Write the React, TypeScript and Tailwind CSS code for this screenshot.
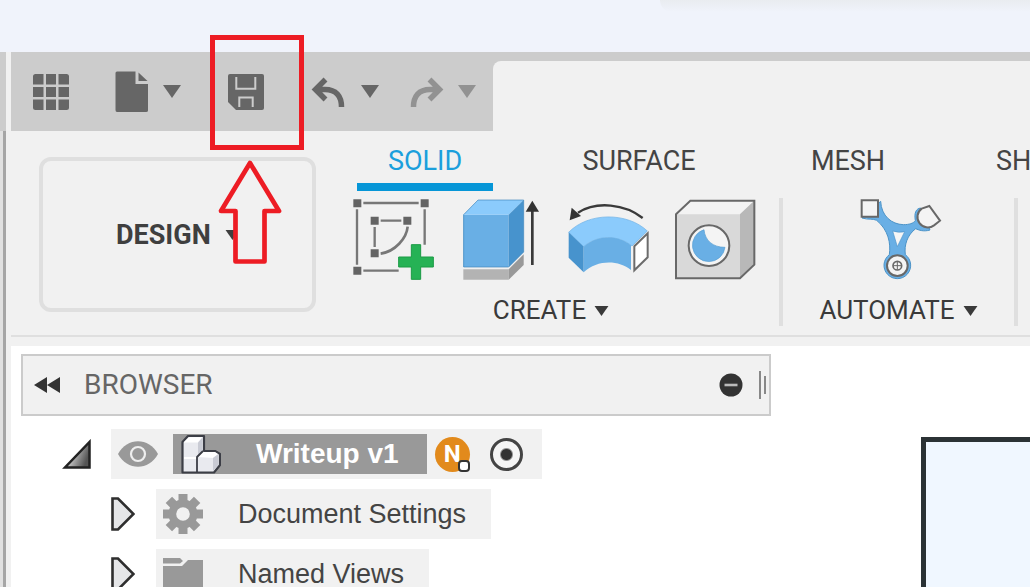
import type { ReactNode } from "react";

function Caret({ className }: { className: string }) {
  return (
    <svg viewBox="0 0 18 13" className={className} fill="currentColor" aria-hidden="true">
      <path d="M0 0h18L9 13z" />
    </svg>
  );
}

function GridIcon() {
  return (
    <svg viewBox="0 0 36 36" className="size-9" fill="#666" aria-hidden="true">
      <path d="M2.500 0H10.500V10.500H0V2.500Q0 0 2.500 0zM13 0h10v10.500H13zM25.500 0h8Q36 0 36 2.500v8H25.500zM0 13h10.500v10H0zM13 13h10v10H13zM25.500 13H36v10H25.500zM0 25.500h10.500V36h-8Q0 36 0 33.500zM13 25.500h10V36H13zM25.500 25.500H36v8q0 2.500-2.500 2.500h-8z" />
    </svg>
  );
}

function FileIcon() {
  return (
    <svg viewBox="0 0 34 42" className="h-[42px] w-[34px]" fill="#666" aria-hidden="true">
      <path d="M2 0.500H20.500V13H33V39.500Q33 41 31 41H2Q0.500 41 0.500 39V2Q0.500 0.500 2 0.500z" />
      <path d="M23.500 1.500L32.500 10H23.500z" />
    </svg>
  );
}

function SaveIcon() {
  return (
    <svg viewBox="0 0 36 36" className="size-9" aria-hidden="true">
      <path d="M2 0H34Q36 0 36 2V34Q36 36 34 36H8L0 28V2Q0 0 2 0z" fill="#666" />
      <path d="M8.300 3V14.700H27.300V3M11.300 33V23.500H24.700V33" fill="none" stroke="#ccc" strokeWidth="2" />
    </svg>
  );
}

function UndoIcon({ flipped = false }: { flipped?: boolean }) {
  return (
    <svg viewBox="0 0 34 32" className="h-8 w-[34px]" fill="none" stroke={flipped ? "#929292" : "#666"} strokeWidth="5.500" aria-hidden="true">
      <g transform={flipped ? "translate(34 0) scale(-1 1)" : undefined}>
        <path d="M14.500 3.500L4.500 13.500L14.500 23.500M4.500 13.500H14C25 13.500 30.500 20 30.500 31" />
      </g>
    </svg>
  );
}

function SketchIcon() {
  return (
    <svg viewBox="39 204 246 246" className="size-[82px]" aria-hidden="true">
      <path d="M70 219H236M51 238V404M254 238V344M70 422H176M122 272H184M104 291V351" stroke="#777" strokeWidth="7" />
      <path d="M203 290C200 325 165 365 122 371" fill="none" stroke="#777" strokeWidth="8" />
      <path d="M40 208h24v24H40zM242 208h24v24h-24zM40 410h24v24H40zM92 260h24v24H92zM190 260h24v24h-24zM92 358h24v24H92z" fill="#646464" />
      <path d="M214 344h28v37h38v30h-38v37h-28v-37h-38v-30h38z" fill="#26b255" stroke="#1b9b45" strokeWidth="3" />
    </svg>
  );
}

function ExtrudeIcon() {
  return (
    <svg viewBox="360 204 246 246" className="size-[82px]" aria-hidden="true">
      <path d="M370 418H506V449H370z" fill="#b3b3b3" />
      <path d="M506 418L551 373V405L506 449z" fill="#999" />
      <path d="M370 254H506V411H370z" fill="#69afe5" />
      <path d="M370 254L414 210H551L506 254z" fill="#8bcbfc" />
      <path d="M506 254L551 210V366L506 411z" fill="#4793cd" />
      <path d="M371 254L414 210H551V366L506 411H371z" fill="none" stroke="#3f86bd" strokeWidth="2" />
      <path d="M577 235V405" stroke="#3a3a3a" strokeWidth="8" />
      <path d="M577 212L597 245H557z" fill="#333" />
    </svg>
  );
}

function RevolveIcon() {
  return (
    <svg viewBox="51 204 246 246" className="size-[82px]" aria-hidden="true">
      <path d="M278 264C225 222 140 212 84 248" fill="none" stroke="#3a3a3a" strokeWidth="7" />
      <path d="M59 271L65 233L93 258z" fill="#333" />
      <path d="M56 307C115 246 232 246 292 303L246 348C205 314 141 314 101 350z" fill="#8bcbfc" stroke="#69afe5" strokeWidth="2" />
      <path d="M56 307L101 350V427L56 383z" fill="#4793cd" />
      <path d="M101 350C141 314 205 314 243 346V420C205 389 141 389 101 427z" fill="#69afe5" />
      <path d="M253 349L293 310V382L253 421z" fill="#fff" stroke="#6c6c6c" strokeWidth="6" />
    </svg>
  );
}

function HoleIcon() {
  return (
    <svg viewBox="375 204 246 246" className="size-[82px]" aria-hidden="true">
      <path d="M381 253L424 212H616V404L573 445H381z" fill="#d9d9d9" />
      <path d="M381 253L424 212H616L573 253z" fill="#f3f3f3" />
      <path d="M573 253L616 212V404L573 445z" fill="#b8b8b8" />
      <path d="M381 253L424 212H616V404L573 445H381z" fill="none" stroke="#686868" strokeWidth="6" />
      <circle cx="480" cy="347" r="61" fill="#f4f4f4" stroke="#686868" strokeWidth="6" />
      <path d="M465 299C468 332 492 352 528 352A49 49 0 1 1 465 299z" fill="#69afe5" stroke="#559dd2" strokeWidth="2" />
    </svg>
  );
}

function AutomateIcon() {
  return (
    <svg viewBox="294 204 246 246" className="size-[82px] overflow-visible" aria-hidden="true">
      <path
        d="M306 264L362 214C364 258 395 283 430 284C448 284 460 280 466 272C462 248 468 236 482 234L510 300C490 306 476 300 467 296C442 315 432 345 436 374A40 40 0 1 1 388 374C393 340 385 300 350 271C338 265 325 270 306 264z"
        fill="#69afe5"
        stroke="#4b93c8"
        strokeWidth="3"
      />
      <path d="M398 303Q415 309 434 305L412 350z" fill="#f6f6f6" stroke="#4b93c8" strokeWidth="2" />
      <path d="M305 211h49v49h-49z" fill="#f4f4f4" stroke="#686868" strokeWidth="6" />
      <path d="M485 236L508 228L540 272L522 286A31 31 0 1 1 485 236z" fill="#f4f4f4" stroke="#686868" strokeWidth="6" />
      <circle cx="412" cy="407" r="31" fill="#f4f4f4" stroke="#686868" strokeWidth="6" />
      <circle cx="412" cy="407" r="13" fill="none" stroke="#686868" strokeWidth="5" />
      <path d="M412 395v24M400 407h24" stroke="#686868" strokeWidth="3" />
    </svg>
  );
}

function EyeIcon() {
  return (
    <svg viewBox="0 0 40 26" className="h-[26px] w-10" aria-hidden="true">
      <path d="M0 13C9-4 31-4 40 13C31 30 9 30 0 13z" fill="#999" />
      <circle cx="20" cy="13" r="7" fill="none" stroke="#eee" strokeWidth="2.200" />
    </svg>
  );
}

function ComponentIcon() {
  return (
    <svg viewBox="0 0 40 40" className="size-10" strokeLinejoin="round" aria-hidden="true">
      <path d="M1.500 8L7 2H23V17H34L39 20V31L33 38.500H1.500z" fill="#e9eaef" stroke="#3c3e46" strokeWidth="2.200" />
      <path d="M3 8L8 3.200H21.500L17 8.500H3z" fill="#fff" />
      <path d="M17 8.500L21.500 3.500V17L17 22z" fill="#c9cbd4" />
      <path d="M17 23L22 18H34L37 20L32 24z" fill="#fff" />
      <path d="M32 24L37.500 20V31L32 37z" fill="#c9cbd4" />
      <path d="M3 24H16" stroke="#fff" strokeWidth="2" />
      <path d="M16 38V23L22 17" fill="none" stroke="#3c3e46" strokeWidth="1.800" />
    </svg>
  );
}

function GearIcon() {
  return (
    <svg viewBox="-20 -20 40 40" className="size-10" aria-hidden="true">
      <g fill="#999">
        {[0, 45, 90, 135].map((angle) => (
          <rect key={angle} x="-4.500" y="-20" width="9" height="40" transform={`rotate(${angle})`} />
        ))}
        <circle r="14.500" />
      </g>
      <circle r="6.800" fill="#f1f1f1" />
    </svg>
  );
}

function FolderIcon() {
  return (
    <svg viewBox="0 0 40 34" className="h-[34px] w-10" fill="#999" aria-hidden="true">
      <path d="M0 1h17l3 3-3 2.500H0zM0 9h19l6-6h15v31H0z" />
    </svg>
  );
}

function Expander({ label }: { label: string }) {
  return (
    <button type="button" aria-label={label} className="mr-[21px] ml-[90px]">
      <svg viewBox="0 0 24 34" className="h-[34px] w-6" aria-hidden="true">
        <path d="M1.500 1.500H7L22.500 17L7 32.500H1.500z" fill="#e5e6e8" stroke="#2e2e2e" strokeWidth="2.600" />
      </svg>
    </button>
  );
}

function TreeItem({ label, icon }: { label: string; icon: ReactNode }) {
  return (
    <li className="flex h-[50px] shrink-0 items-center">
      <Expander label={`Expand ${label}`} />
      <div className="flex h-full items-center gap-[35px] bg-[#f1f1f1] pr-[25px] pl-[7px]">
        {icon}
        <span className="font-['Liberation_Sans',sans-serif] text-[27px] leading-6 whitespace-nowrap text-[#444]">{label}</span>
      </div>
    </li>
  );
}

function PanelMenu({ label }: { label: string }) {
  return (
    <button type="button" className="flex h-[31px] items-center gap-2 text-[26px] leading-[31px] text-[#3a3a3a]">
      {label}
      <Caret className="h-[10px] w-[15px]" />
    </button>
  );
}

const tabs = [
  { name: "SOLID", box: "w-[136px] justify-center border-[#0696d7] text-[#1b9fdc]" },
  { name: "SURFACE", box: "w-[178px] justify-center border-transparent text-[#444]" },
  { name: "MESH", box: "w-[126px] justify-center border-transparent text-[#444]" },
  { name: "SH", box: "pl-7 border-transparent text-[#444]" },
];

const createTools = [
  { name: "Create sketch", icon: <SketchIcon /> },
  { name: "Extrude", icon: <ExtrudeIcon /> },
  { name: "Revolve", icon: <RevolveIcon /> },
  { name: "Hole", icon: <HoleIcon /> },
];

export default function App() {
  return (
    <div className="relative flex h-screen flex-col overflow-hidden bg-white font-[Roboto,sans-serif]">
      <div className="flex h-[52px] shrink-0 bg-[#f0f3fb]">
        <div className="ml-[660px] h-3 flex-1 rounded-bl-xl bg-linear-to-b from-[#e9ecf0] to-[#f0f3fb]" />
      </div>

      <div className="flex min-h-0 flex-1">
        <div className="flex w-[11px] shrink-0 flex-col bg-[#f1f1f1]">
          <div className="h-[79px] w-[6px] shrink-0 bg-[#ccc]" />
          <div className="w-[6px] flex-1 border-r-[3px] border-[#a6a6a6] bg-[#e1e1e1]" />
        </div>

        <div className="flex min-w-0 flex-1 flex-col">
          <header className="flex h-[79px] shrink-0 items-center bg-[#ccc] text-[#666]">
            <button type="button" aria-label="Data panel" className="ml-[22px]"><GridIcon /></button>
            <button type="button" aria-label="File" className="ml-[46px] flex items-center gap-[14px]">
              <FileIcon />
              <Caret className="h-[13px] w-[18px]" />
            </button>
            <button type="button" aria-label="Save" className="ml-[47px]"><SaveIcon /></button>
            <button type="button" aria-label="Undo" className="ml-[47px] flex items-center gap-4">
              <UndoIcon />
              <Caret className="h-[13px] w-[18px]" />
            </button>
            <button type="button" aria-label="Redo" className="ml-[31px] flex items-center gap-[14px] text-[#929292]">
              <UndoIcon flipped />
              <Caret className="h-[13px] w-[18px]" />
            </button>
            <div className="ml-[17px] h-[70px] flex-1 self-end rounded-tl-lg bg-[#f1f1f1]" />
          </header>

          <div className="flex shrink-0 bg-[#f1f1f1]">
            <button
              type="button"
              className="mt-[26px] ml-7 flex h-[155px] w-[277px] shrink-0 items-center gap-[14px] rounded-xl border-4 border-[#dfdfdf] pl-[73px] text-[27px] leading-8 font-bold text-[#3f3f3f]"
            >
              DESIGN
              <Caret className="h-[10px] w-[15px]" />
            </button>

            <div className="ml-[37px] flex min-w-0 flex-1 flex-col">
              <div role="tablist" className="flex gap-[57px] overflow-hidden pl-1">
                {tabs.map((tab, i) => (
                  <button
                    key={tab.name}
                    type="button"
                    role="tab"
                    aria-selected={i === 0}
                    className={`flex h-[60px] shrink-0 items-center border-b-8 pt-2 text-[27px] leading-8 whitespace-nowrap ${tab.box}`}
                  >
                    {tab.name}
                  </button>
                ))}
              </div>
              <div className="mt-[7px] flex">
                <section className="flex w-[430px] shrink-0 flex-col items-start gap-[15px] border-r-4 border-[#dfdfdf]">
                  <div className="flex gap-[25px]">
                    {createTools.map((tool) => (
                      <button key={tool.name} type="button" aria-label={tool.name}>{tool.icon}</button>
                    ))}
                  </div>
                  <div className="flex w-[396px] justify-center">
                    <PanelMenu label="CREATE" />
                  </div>
                </section>
                <section className="flex w-[235px] shrink-0 flex-col items-center gap-[15px] border-r-4 border-[#dfdfdf]">
                  <button type="button" aria-label="Automated modeling"><AutomateIcon /></button>
                  <PanelMenu label="AUTOMATE" />
                </section>
              </div>
            </div>
          </div>
          <div className="h-[9px] shrink-0 bg-[#f1f1f1]" />
          <div className="h-[11px] shrink-0 border-t-2 border-[#dfdfdf] bg-[#f1f1f1]" />

          <main className="flex min-h-0 flex-1 overflow-hidden bg-white pl-[10px]">
            <aside className="flex w-[750px] shrink-0 flex-col pt-2">
              <div className="flex h-[62px] shrink-0 items-center border-2 border-[#cbcbcb] bg-[#f1f1f1]">
                <button type="button" aria-label="Collapse browser" className="ml-[11px]">
                  <svg viewBox="0 0 26 16" className="h-4 w-[26px]" fill="#333" aria-hidden="true">
                    <path d="M13 0V16L0 8zM26 0V16L13 8z" />
                  </svg>
                </button>
                <h2 className="ml-6 text-[28px] leading-8 text-[#666]">BROWSER</h2>
                <button type="button" aria-label="Minimize" className="ml-auto">
                  <svg viewBox="0 0 24 24" className="size-6" aria-hidden="true">
                    <circle cx="12" cy="12" r="11.500" fill="#333" />
                    <path d="M5.500 12h13" stroke="#bbb" strokeWidth="2.600" />
                  </svg>
                </button>
                <div className="mr-[3px] ml-4 flex items-center gap-[3px]">
                  <div className="h-7 w-[2px] bg-[#888]" />
                  <div className="h-[18px] w-[2px] bg-[#888]" />
                </div>
              </div>

              <ul className="mt-[13px] flex flex-col gap-[10px]">
                <li className="flex h-[50px] shrink-0 items-center">
                  <button type="button" aria-label="Collapse Writeup v1" className="mr-5 ml-[41px]">
                    <svg viewBox="0 0 29 30" className="h-[30px] w-[29px]" aria-hidden="true">
                      <defs>
                        <linearGradient id="expanded" x1="0" y1="0" x2="1" y2="0.400">
                          <stop offset="0.300" stopColor="#ddd" />
                          <stop offset="1" stopColor="#555" />
                        </linearGradient>
                      </defs>
                      <path d="M27.500 3V28.500H3z" fill="url(#expanded)" stroke="#222" strokeWidth="2.500" />
                    </svg>
                  </button>
                  <div className="flex h-full items-center bg-[#f1f1f1] pr-[19px] pl-[7px]">
                    <button type="button" aria-label="Toggle visibility"><EyeIcon /></button>
                    <div className="ml-[15px] flex h-10 items-center gap-[35px] bg-[#999] pr-7 pl-2">
                      <ComponentIcon />
                      <span className="font-['Liberation_Sans',sans-serif] text-[28px] leading-8 font-bold whitespace-nowrap text-white">Writeup v1</span>
                    </div>
                    <div className="relative ml-2 flex size-[35px] items-center justify-center rounded-full bg-[#e28a1c] text-[24px] leading-none font-bold text-white">
                      N
                      <div className="absolute right-0 bottom-0 size-3 rounded-sm border-2 border-[#333] bg-white" />
                    </div>
                    <input
                      type="radio"
                      defaultChecked
                      aria-label="Activate Writeup v1"
                      className="ml-5 size-[33px] appearance-none rounded-full border-[3px] border-[#444] bg-[radial-gradient(circle,#333_5px,#f5f5f5_7px)]"
                    />
                  </div>
                </li>
                <TreeItem label="Document Settings" icon={<GearIcon />} />
                <TreeItem label="Named Views" icon={<FolderIcon />} />
              </ul>
            </aside>
            <div className="mt-[91px] ml-[150px] flex-1 border-t-[5px] border-l-[5px] border-[#2b3235] bg-[#f0f7ff]" />
          </main>
        </div>
      </div>

      <div className="pointer-events-none absolute top-[35px] left-[210px] h-[115px] w-[94px] border-[5px] border-[#ed1c24]" />
      <svg viewBox="0 0 66 106" className="pointer-events-none absolute top-[159px] left-[217px] h-[106px] w-[66px]" aria-hidden="true">
        <path d="M33 4L62 52H47.500V102.500H18.500V52H4z" fill="#f1f1f1" stroke="#ed1c24" strokeWidth="4.700" strokeLinejoin="round" />
      </svg>
    </div>
  );
}
